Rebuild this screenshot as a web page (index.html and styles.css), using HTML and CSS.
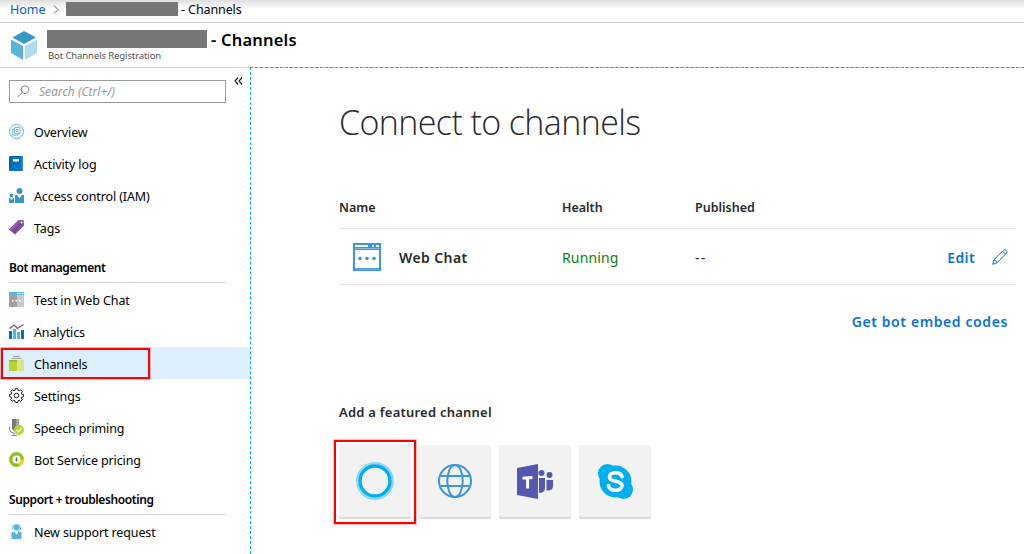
FILE: index.html
```html
<!DOCTYPE html>
<html lang="en">
<head>
    <meta charset="UTF-8">
    <meta name="viewport" content="width=device-width, initial-scale=1.0">
    <title>Channels</title>
    <link rel="stylesheet" href="styles.css">
</head>
<body>
    <nav class="breadcrumb">
        <a class="home">Home</a>
        <svg class="chevron" width="6" height="9" viewBox="0 0 6 9"><path d="M1 .5l4 4-4 4" fill="none" stroke="#666"/></svg>
        <span class="redacted small"></span>
        <span class="crumb">- Channels</span>
    </nav>
    <header class="blade-header">
        <svg class="cube" width="26" height="29" viewBox="0 0 26 29">
            <path d="M13 0L25 6.6 13 13 1.500 6.600z" fill="#3999c6"/>
            <path d="M0 8.500L12 15v14L0 22z" fill="#59b4d9"/>
            <path d="M26 8.500L14 15v14l12-7z" fill="#b0dbee"/>
        </svg>
        <div class="titles">
            <div class="title-row">
                <span class="redacted"></span>
                <h1>- Channels</h1>
            </div>
            <div class="subtitle">Bot Channels Registration</div>
        </div>
    </header>
    <div class="blade">
        <aside class="sidebar">
            <div class="search-row">
                <div class="search">
                    <svg width="13" height="13" viewBox="0 0 13 13"><circle cx="8" cy="4.700" r="3.900" fill="none" stroke="#888"/><path d="M5.200 7.500L.5 12.300" stroke="#888"/></svg>
                    <span>Search (Ctrl+/)</span>
                </div>
                <svg class="collapse" width="9" height="8" viewBox="0 0 9 8"><path d="M4 .5L1 4l3 3.500M8 .5L5 4l3 3.500" fill="none" stroke="#222" stroke-width="1.200"/></svg>
            </div>
            <ul class="menu">
                <li>
                    <svg class="icon" viewBox="0 0 15 15"><circle cx="7.500" cy="7.500" r="7" fill="#fff" stroke="#59b4d9"/><path d="M5.500 3.500h5.500v6H5.500zM5 5H3.700v6.200h5.500V10M7 5.500h2.800M7 7.500h2.800" fill="none" stroke="#59b4d9" stroke-width=".9"/></svg>
                    <span>Overview</span>
                </li>
                <li>
                    <svg class="icon" viewBox="0 0 15 15"><path d="M0 1l1-1h13v15H1l-1-1z" fill="#0072c6"/><path d="M0 1l1-1h1v15H1l-1-1z" fill="#0c5da5"/><path d="M12.500 0H14v15h-1.500z" fill="#3989cd"/><path d="M4 3h6v2.500H4z" fill="#fff"/></svg>
                    <span>Activity log</span>
                </li>
                <li>
                    <svg class="icon" viewBox="0 0 15 15"><circle cx="10.500" cy="3" r="3" fill="#3999c6"/><path d="M6 7h2l2.500 3L13 7h2v8H6z" fill="#3999c6"/><circle cx="2.500" cy="7.700" r="1.900" fill="#3999c6"/><path d="M0 10h1l1.500 2L4 10h1v5H0z" fill="#3999c6"/></svg>
                    <span>Access control (IAM)</span>
                </li>
                <li>
                    <svg class="icon" viewBox="0 0 15 15"><path d="M9 .5L14.500 0 15 5.500 6 14.500 0 9.500z" fill="#804998"/><path d="M9 .5L0 9.500l2.500 2L12 .2z" fill="#925fa8"/><circle cx="12.500" cy="2.600" r="1" fill="#fff"/></svg>
                    <span>Tags</span>
                </li>
            </ul>
            <h2>Bot management</h2>
            <ul class="menu">
                <li>
                    <svg class="icon" viewBox="0 0 15 15"><path d="M0 0h15v15H0z" fill="#a0a1a2"/><path d="M8 3h7v12H8z" fill="#c9cacb"/><path d="M0 0h15v3H0z" fill="#59b4d9"/><path d="M8 1h4v1H8zM13 1h1.500v1H13z" fill="#fff"/><path d="M3 8h1.500v1.500H3zM6.500 8H8v1.500H6.500zM10 8h1.500v1.500H10z" fill="#fff"/></svg>
                    <span>Test in Web Chat</span>
                </li>
                <li>
                    <svg class="icon" viewBox="0 0 15 15"><path d="M0 7h3v8H0zM12 6h3v9h-3z" fill="#0072c6"/><path d="M4 5h3v10H4zM8 8h3v7H8z" fill="#59b4d9"/><path d="M.5 4.500L5 1l3.500 3.500L14.500.5" fill="none" stroke="#804998" stroke-width="1.200"/></svg>
                    <span>Analytics</span>
                </li>
                <li class="active">
                    <svg class="icon" viewBox="0 0 15 15"><path d="M4 .5h7M2.500 2.500h10" stroke="#a0a1a2"/><path d="M0 4h15v11H0z" fill="#b8d432"/><path d="M8 4h7v11H8z" fill="#d7e68c"/><path d="M0 4h8v1.500H0z" fill="#a0b52e"/></svg>
                    <span>Channels</span>
                </li>
                <li>
                    <svg class="icon" viewBox="0 0 15 15"><path d="M6.300.6h2.400l.4 1.900 1.100.4 1.600-1 1.600 1.600-1 1.600.4 1.100 1.700.4v2l-1.800.5-.4 1.100 1 1.600-1.600 1.600-1.600-1-1.100.4-.4 1.700H6.300l-.4-1.800-1.100-.4-1.600 1-1.600-1.600 1-1.600-.4-1.100-1.700-.4v-2l1.800-.5.4-1.100-1-1.600 1.600-1.600 1.600 1 1.100-.4z" fill="none" stroke="#222"/><circle cx="7.500" cy="7.500" r="2.300" fill="none" stroke="#222"/></svg>
                    <span>Settings</span>
                </li>
                <li>
                    <svg class="icon mic" viewBox="0 0 15 17"><path d="M3 0h7v12H5l-2-2z" fill="#7a7a7a"/><path d="M7 0h3v12H7z" fill="#a0a1a2"/><path d="M.5 8v2.500Q1 14 5 14v2M3 16.500h5" fill="none" stroke="#888"/><circle cx="10" cy="11" r="5" fill="#b8d432"/><path d="M7.500 11l2 1.800 3-3.800" fill="none" stroke="#fff" stroke-width="1.200"/></svg>
                    <span>Speech priming</span>
                </li>
                <li>
                    <svg class="icon" viewBox="0 0 15 15"><circle cx="7.500" cy="7.500" r="5.700" fill="#fff" stroke="#8cc31c" stroke-width="3.400"/><path d="M13.200 7.500a5.700 5.700 0 0 1-3.400 5.200" fill="none" stroke="#fcd116" stroke-width="3.400"/><path d="M7.500 5.300v4.400M8.600 6.200H6.900v1.200h1.300v1.300H6.400" fill="none" stroke="#555" stroke-width=".6"/></svg>
                    <span>Bot Service pricing</span>
                </li>
            </ul>
            <h2>Support + troubleshooting</h2>
            <ul class="menu">
                <li>
                    <svg class="icon" viewBox="0 0 15 15"><path d="M2.500 8h3l2 2.500 2-2.500h3v7h-10z" fill="#59b4d9"/><circle cx="7.500" cy="4" r="3" fill="#59b4d9"/><path d="M3.500 5V4a4 3.500 0 0 1 8 0v1.500L9 7.500" fill="none" stroke="#59b4d9"/><path d="M5 5.500q2.500 3 5 0" fill="none" stroke="#fff" stroke-width=".7"/></svg>
                    <span>New support request</span>
                </li>
            </ul>
        </aside>
        <main class="content">
            <h3 class="page-title">Connect to channels</h3>
            <div class="channels">
                <div class="row head">
                    <span>Name</span>
                    <span>Health</span>
                    <span>Published</span>
                </div>
                <div class="row channel">
                    <div class="name">
                        <svg width="28" height="28" viewBox="0 0 28 28"><path d="M0 0h28v28H0z" fill="#3a96dd"/><path d="M2 2h13v2H2zM19 2h2v2h-2zM23 2h3v2h-3zM2 7h24v18H2z" fill="#fff"/><path d="M2 5.500h24M2 26h24" stroke="#8ec3ec" stroke-width=".8"/><g fill="#3a96dd"><circle cx="7" cy="15.500" r="1.800"/><circle cx="14" cy="15.500" r="1.800"/><circle cx="21" cy="15.500" r="1.800"/></g></svg>
                        <span class="label">Web Chat</span>
                    </div>
                    <span class="label running">Running</span>
                    <span class="label dashes">--</span>
                    <a class="edit">
                        <span class="label">Edit</span>
                        <svg width="16" height="16" viewBox="0 0 16 16"><path d="M.7 15.300l1.200-4.500L11.800 1q1.200-.9 2.400.3 1.600 1.300.5 2.600L5 13.800zM10.500 2.200l3 3M1.900 10.800q2.500.5 3.100 3" fill="none" stroke="#0c72d8"/></svg>
                    </a>
                </div>
            </div>
            <a class="embed">Get bot embed codes</a>
            <div class="featured">Add a featured channel</div>
            <div class="tiles">
                <div class="tile selected">
                    <svg width="38" height="38" viewBox="0 0 38 38"><circle cx="19" cy="19" r="17.700" fill="none" stroke="#8fd8f3" stroke-width="2.500"/><circle cx="19" cy="19" r="15" fill="#f2f2f2" stroke="#00b0f0" stroke-width="3.400"/></svg>
                </div>
                <div class="tile">
                    <svg width="34" height="34" viewBox="0 0 34 34"><g fill="none" stroke="#3a96dd" stroke-width="2"><circle cx="17" cy="17" r="16"/><ellipse cx="17" cy="17" rx="7.700" ry="16"/><path d="M2.500 12h29M2.500 22h29"/></g></svg>
                </div>
                <div class="tile">
                    <svg width="36" height="35" viewBox="0 0 36 35"><g fill="#5558af"><path d="M0 4l21-4v35L0 31z"/><circle cx="24.500" cy="9" r="3"/><circle cx="32.500" cy="11" r="3"/><path d="M22 14h6v11q-1 4-6 4zM29.500 16H36v7q-1 4-6.500 3.500z"/></g><path d="M5.500 12.700l10-.7v3l-3.400.2v9.400l-3-.2v-9l-3.600.2z" fill="#fff"/></svg>
                </div>
                <div class="tile">
                    <svg width="35" height="35" viewBox="0 0 35 35"><g fill="#00aff0"><circle cx="17.500" cy="17.500" r="16"/><circle cx="9.500" cy="9.500" r="9.500"/><circle cx="25.500" cy="25.500" r="9.500"/></g><path d="M24 12.700c-.7-3-3.300-4-6.500-4-3.500 0-6 1.500-6 4.200 0 6 12.500 2.700 12.500 8.700 0 3-2.700 4.700-6.500 4.700-4 0-6.300-1.600-7-4.700" fill="none" stroke="#fff" stroke-width="3.600" stroke-linecap="round"/></svg>
                </div>
            </div>
        </main>
    </div>
</body>
</html>
```

FILE: styles.css
```css
*, *::after {
    box-sizing: border-box;
}
body {
    margin: 0;
    height: 554px;
    overflow: hidden;
    display: flex;
    flex-direction: column;
    font-family: "Noto Sans", "Open Sans", sans-serif;
    font-size: 12.5px;
    color: #000;
    background: #fff;
    white-space: nowrap;
}
h1, h2, h3, ul {
    margin: 0;
    padding: 0;
}
.breadcrumb {
    height: 23px;
    flex: none;
    display: flex;
    align-items: center;
    padding: 0 0 4px 10px;
    border-bottom: 1px solid #d5d5d5;
    background: linear-gradient(#dedede, #fff 9px);
}
.home {
    width: 43px;
    color: #015cda;
}
.crumb {
    letter-spacing: -0.1px;
}
.redacted {
    width: 160px;
    height: 18px;
    background: #777;
}
.redacted.small {
    width: 112px;
    height: 14px;
    margin: 0 3px 0 7px;
}
.blade-header {
    height: 45px;
    flex: none;
    display: flex;
    padding: 7px 0 0 11px;
    border-bottom: 1px solid #d5d5d5;
}
.titles {
    margin-left: 10px;
}
.title-row {
    display: flex;
    align-items: center;
    gap: 4px;
    height: 18px;
}
.blade-header h1 {
    padding-top: 2px;
    font-size: 16.5px;
    font-weight: 600;
    line-height: 18px;
    letter-spacing: 0.2px;
}
.cube {
    margin-top: 1px;
}
.subtitle {
    margin-left: 1px;
    font-size: 9.6px;
    line-height: 16px;
    letter-spacing: -0.15px;
    color: #555;
}
.blade {
    flex: 1;
    display: flex;
    margin-top: -1px;
}
.sidebar {
    width: 250px;
    flex: none;
    padding-top: 13px;
}
.search-row {
    display: flex;
    padding-left: 9px;
    height: 35px;
}
.search {
    width: 217px;
    height: 23px;
    display: flex;
    align-items: center;
    gap: 9px;
    padding-left: 7px;
    border: 1px solid #999;
    color: #999;
    font-size: 12px;
    font-style: italic;
}
.collapse {
    margin: -3px 0 0 8px;
}
.menu {
    list-style: none;
}
.menu li {
    height: 32px;
    display: flex;
    align-items: center;
    gap: 10px;
    padding-left: 9px;
    letter-spacing: -0.12px;
}
.menu li span {
    padding-top: 2px;
}
.menu .active {
    width: 250px;
    background: #dcefff;
    position: relative;
}
.menu .active::after {
    content: "";
    position: absolute;
    left: 1px;
    top: 1px;
    width: 149px;
    height: 31px;
    border: 2px solid #f00;
    box-shadow: 0 0 0 1px rgba(255, 0, 0, 0.25);
}
.icon {
    width: 15px;
    height: 15px;
    flex: none;
}
.icon.mic {
    height: 17px;
}
.sidebar h2 {
    width: 217px;
    height: 25px;
    margin: 15px 0 0 9px;
    border-bottom: 1px solid #d5d5d5;
    font-size: 12px;
    font-weight: 600;
    line-height: 20px;
    letter-spacing: -0.4px;
}
.content {
    flex: 1;
    padding: 30px 8px 0 88px;
    border-left: 1px dashed #00b0e8;
    border-top: 1px dashed #00b0e8;
    color: #2a2a2a;
}
.page-title {
    height: 90px;
    font-family: "Open Sans", "Noto Sans", sans-serif;
    font-size: 34px;
    font-weight: 300;
    line-height: 48px;
    letter-spacing: -0.6px;
}
.row {
    display: grid;
    grid-template-columns: 223px 133px 1fr auto;
    align-items: center;
    border-bottom: 1px solid #e2e2e2;
}
.head {
    height: 41px;
    padding-bottom: 2px;
    font-weight: 600;
}
.channel {
    height: 56px;
    font-size: 14px;
}
.label {
    padding-top: 2px;
    letter-spacing: 0.15px;
}
.name {
    display: flex;
    align-items: center;
    gap: 18px;
    padding-left: 14px;
    font-weight: 600;
}
.name .label {
    letter-spacing: 0.4px;
}
.running {
    color: #107c10;
}
.dashes {
    letter-spacing: 1.2px;
}
.edit {
    display: flex;
    align-items: center;
    gap: 17px;
    padding-right: 8px;
}
.edit, .embed {
    color: #0c72d8;
    font-weight: 600;
}
.edit .label {
    letter-spacing: 0.4px;
}
.embed {
    display: block;
    margin-top: 26px;
    padding-right: 8px;
    text-align: right;
    font-size: 14px;
    line-height: 22px;
    letter-spacing: 0.6px;
}
.featured {
    margin-top: 69px;
    font-size: 13px;
    font-weight: 600;
    line-height: 20px;
    letter-spacing: 0.23px;
}
.tiles {
    display: flex;
    gap: 8px;
    margin-top: 23px;
}
.tile {
    width: 72px;
    height: 72px;
    display: flex;
    align-items: center;
    justify-content: center;
    border-radius: 2px;
    background: #f2f2f2;
    box-shadow: 0 2px 1px #d8d8d8;
}
.selected {
    position: relative;
}
.selected::after {
    content: "";
    position: absolute;
    left: -5px;
    top: -5px;
    width: 82px;
    height: 84px;
    border: 2px solid #f00;
    box-shadow: 0 0 0 1px rgba(255, 0, 0, 0.25);
}
```
